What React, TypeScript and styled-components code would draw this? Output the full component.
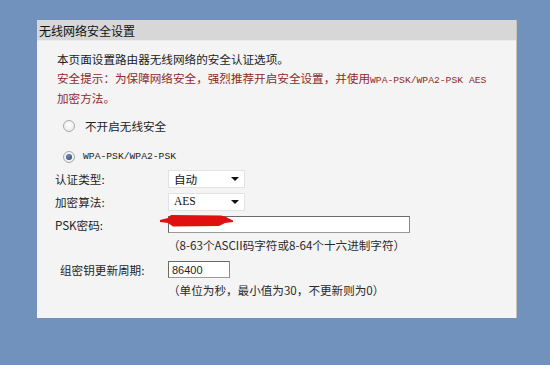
import React from 'react';
import styled, { createGlobalStyle } from 'styled-components';

// ─── Global ────────────────────────────────────────────────────────────────

const GlobalStyle = createGlobalStyle`
  html, body {
    margin: 0;
    padding: 0;
    background: #7092bd;
  }
  body {
    font-family: 'Noto Sans CJK SC', 'Liberation Sans', sans-serif;
    font-size: 11.6px;
    color: #222;
  }
`;

// ─── Styled components ─────────────────────────────────────────────────────

const Page = styled.div`
  width: 550px;
  height: 365px;
  padding: 20px 0 0 37px;
  box-sizing: border-box;
`;
const Panel = styled.div`
  width: 480px;
  height: 298px;
  background: #f4f4f4;
  border-right: 1px solid #c9c2b8;
  box-sizing: border-box;
  display: flex;
  flex-direction: column;
`;
const Header = styled.div`
  height: 21px;
  background: #d7d7d7;
  display: flex;
  align-items: center;
  padding-left: 2px;
  font-size: 12px;
  color: #111;
  border-bottom: 1px solid #ececec;
  box-sizing: border-box;
`;
const Body = styled.div`
  padding: 9px 0 0 20px;
  display: flex;
  flex-direction: column;
`;
const Intro = styled.div`
  line-height: 19px;
  color: #1a1a1a;
`;
const Warn = styled.div`
  line-height: 19.5px;
  height: 39px;
  color: #8e2a2a;
`;
const Mono = styled.span<{ $size?: number }>`
  font-family: 'Liberation Mono', 'DejaVu Sans Mono', monospace;
  font-size: ${({ $size }) => $size ?? 9.7}px;
  line-height: 1;
`;
const SerifText = styled.span`
  font-family: 'Liberation Serif', serif;
  font-size: 11.5px;
  line-height: 1;
`;
const RadioRow = styled.div<{ $top: number; $gap: number }>`
  display: flex;
  align-items: center;
  height: 20px;
  margin-top: ${({ $top }) => $top}px;
  padding-left: 6px;
  gap: ${({ $gap }) => $gap}px;
`;
const Radio = styled.span<{ $checked?: boolean }>`
  width: 12px;
  height: 12px;
  border-radius: 50%;
  box-sizing: border-box;
  border: 1px solid #a9a9a9;
  background: radial-gradient(circle at 50% 40%, #ffffff 0%, #e6e6e6 100%);
  display: flex;
  align-items: center;
  justify-content: center;
  &::after {
    content: '';
    width: 6px;
    height: 6px;
    border-radius: 50%;
    background: ${({ $checked }) => ($checked ? 'radial-gradient(circle at 40% 35%, #6f8fb8, #1f3d66)' : 'transparent')};
  }
`;
const FormRow = styled.div<{ $h: number; $top?: number }>`
  display: grid;
  grid-template-columns: 111px auto;
  align-items: center;
  height: ${({ $h }) => $h}px;
  margin-top: ${({ $top }) => $top ?? 0}px;
`;
const Label = styled.div<{ $indent?: number }>`
  margin-left: ${({ $indent }) => $indent ?? -2}px;
  color: #1e1e1e;
`;
const Select = styled.div`
  width: 77px;
  height: 18px;
  box-sizing: border-box;
  background: #fff;
  border: 1px solid #e2e2e2;
  display: flex;
  align-items: center;
  justify-content: space-between;
  padding: 0 5px 0 5px;
  color: #111;
  &::after {
    content: '';
    border-left: 4px solid transparent;
    border-right: 4px solid transparent;
    border-top: 4px solid #111;
  }
`;
const InputWrap = styled.div`
  position: relative;
  display: flex;
`;
const TextInput = styled.div<{ $w: number }>`
  width: ${({ $w }) => $w}px;
  height: 17px;
  box-sizing: border-box;
  background: #fff;
  border: 1px solid #6a6a6a;
  border-right-color: #8a8a8a;
  border-bottom-color: #9a9a9a;
  display: flex;
  align-items: center;
  padding-left: 3px;
  font-family: 'Liberation Sans', sans-serif;
  font-size: 11px;
  color: #222;
`;
const Scribble = styled.svg`
  position: absolute;
  left: -9px;
  top: -2px;
`;
const Hint = styled.div<{ $top?: number }>`
  margin-left: 111px;
  line-height: 17px;
  margin-top: ${({ $top }) => $top ?? 0}px;
  color: #2a2a2a;
`;

// ─── Component ─────────────────────────────────────────────────────────────

export default function App() {
  return (
    <>
      <GlobalStyle />
      <Page>
        <Panel>
          <Header>无线网络安全设置</Header>
          <Body>
            <Intro>本页面设置路由器无线网络的安全认证选项。</Intro>
            <Warn>
              安全提示：为保障网络安全，强烈推荐开启安全设置，并使用<Mono>WPA-PSK/WPA2-PSK AES</Mono>
              <br />
              加密方法。
            </Warn>

            <RadioRow $top={8} $gap={10}>
              <Radio />
              <span>不开启无线安全</span>
            </RadioRow>
            <RadioRow $top={11} $gap={8}>
              <Radio $checked />
              <Mono>WPA-PSK/WPA2-PSK</Mono>
            </RadioRow>

            <FormRow $h={22} $top={1}>
              <Label>认证类型:</Label>
              <Select>自动</Select>
            </FormRow>
            <FormRow $h={23}>
              <Label>加密算法:</Label>
              <Select>
                <SerifText>AES</SerifText>
              </Select>
            </FormRow>
            <FormRow $h={23}>
              <Label>PSK密码:</Label>
              <InputWrap>
                <TextInput $w={242} />
                <Scribble width="76" height="14" viewBox="0 0 76 14">
                  <path
                    d="M1 6 L9 4 L12 1 L62 1.5 L67 3 L74 6.5 L74 8 L66 9 L60 12 L14 12.5 L9 9 L1 8 Z"
                    fill="#e01010"
                  />
                </Scribble>
              </InputWrap>
            </FormRow>
            <Hint $top={1}>（8-63个ASCII码字符或8-64个十六进制字符）</Hint>

            <FormRow $h={23} $top={4}>
              <Label $indent={3}>组密钥更新周期:</Label>
              <TextInput $w={62}>86400</TextInput>
            </FormRow>
            <Hint $top={1}>（单位为秒，最小值为30，不更新则为0）</Hint>
          </Body>
        </Panel>
      </Page>
    </>
  );
}
